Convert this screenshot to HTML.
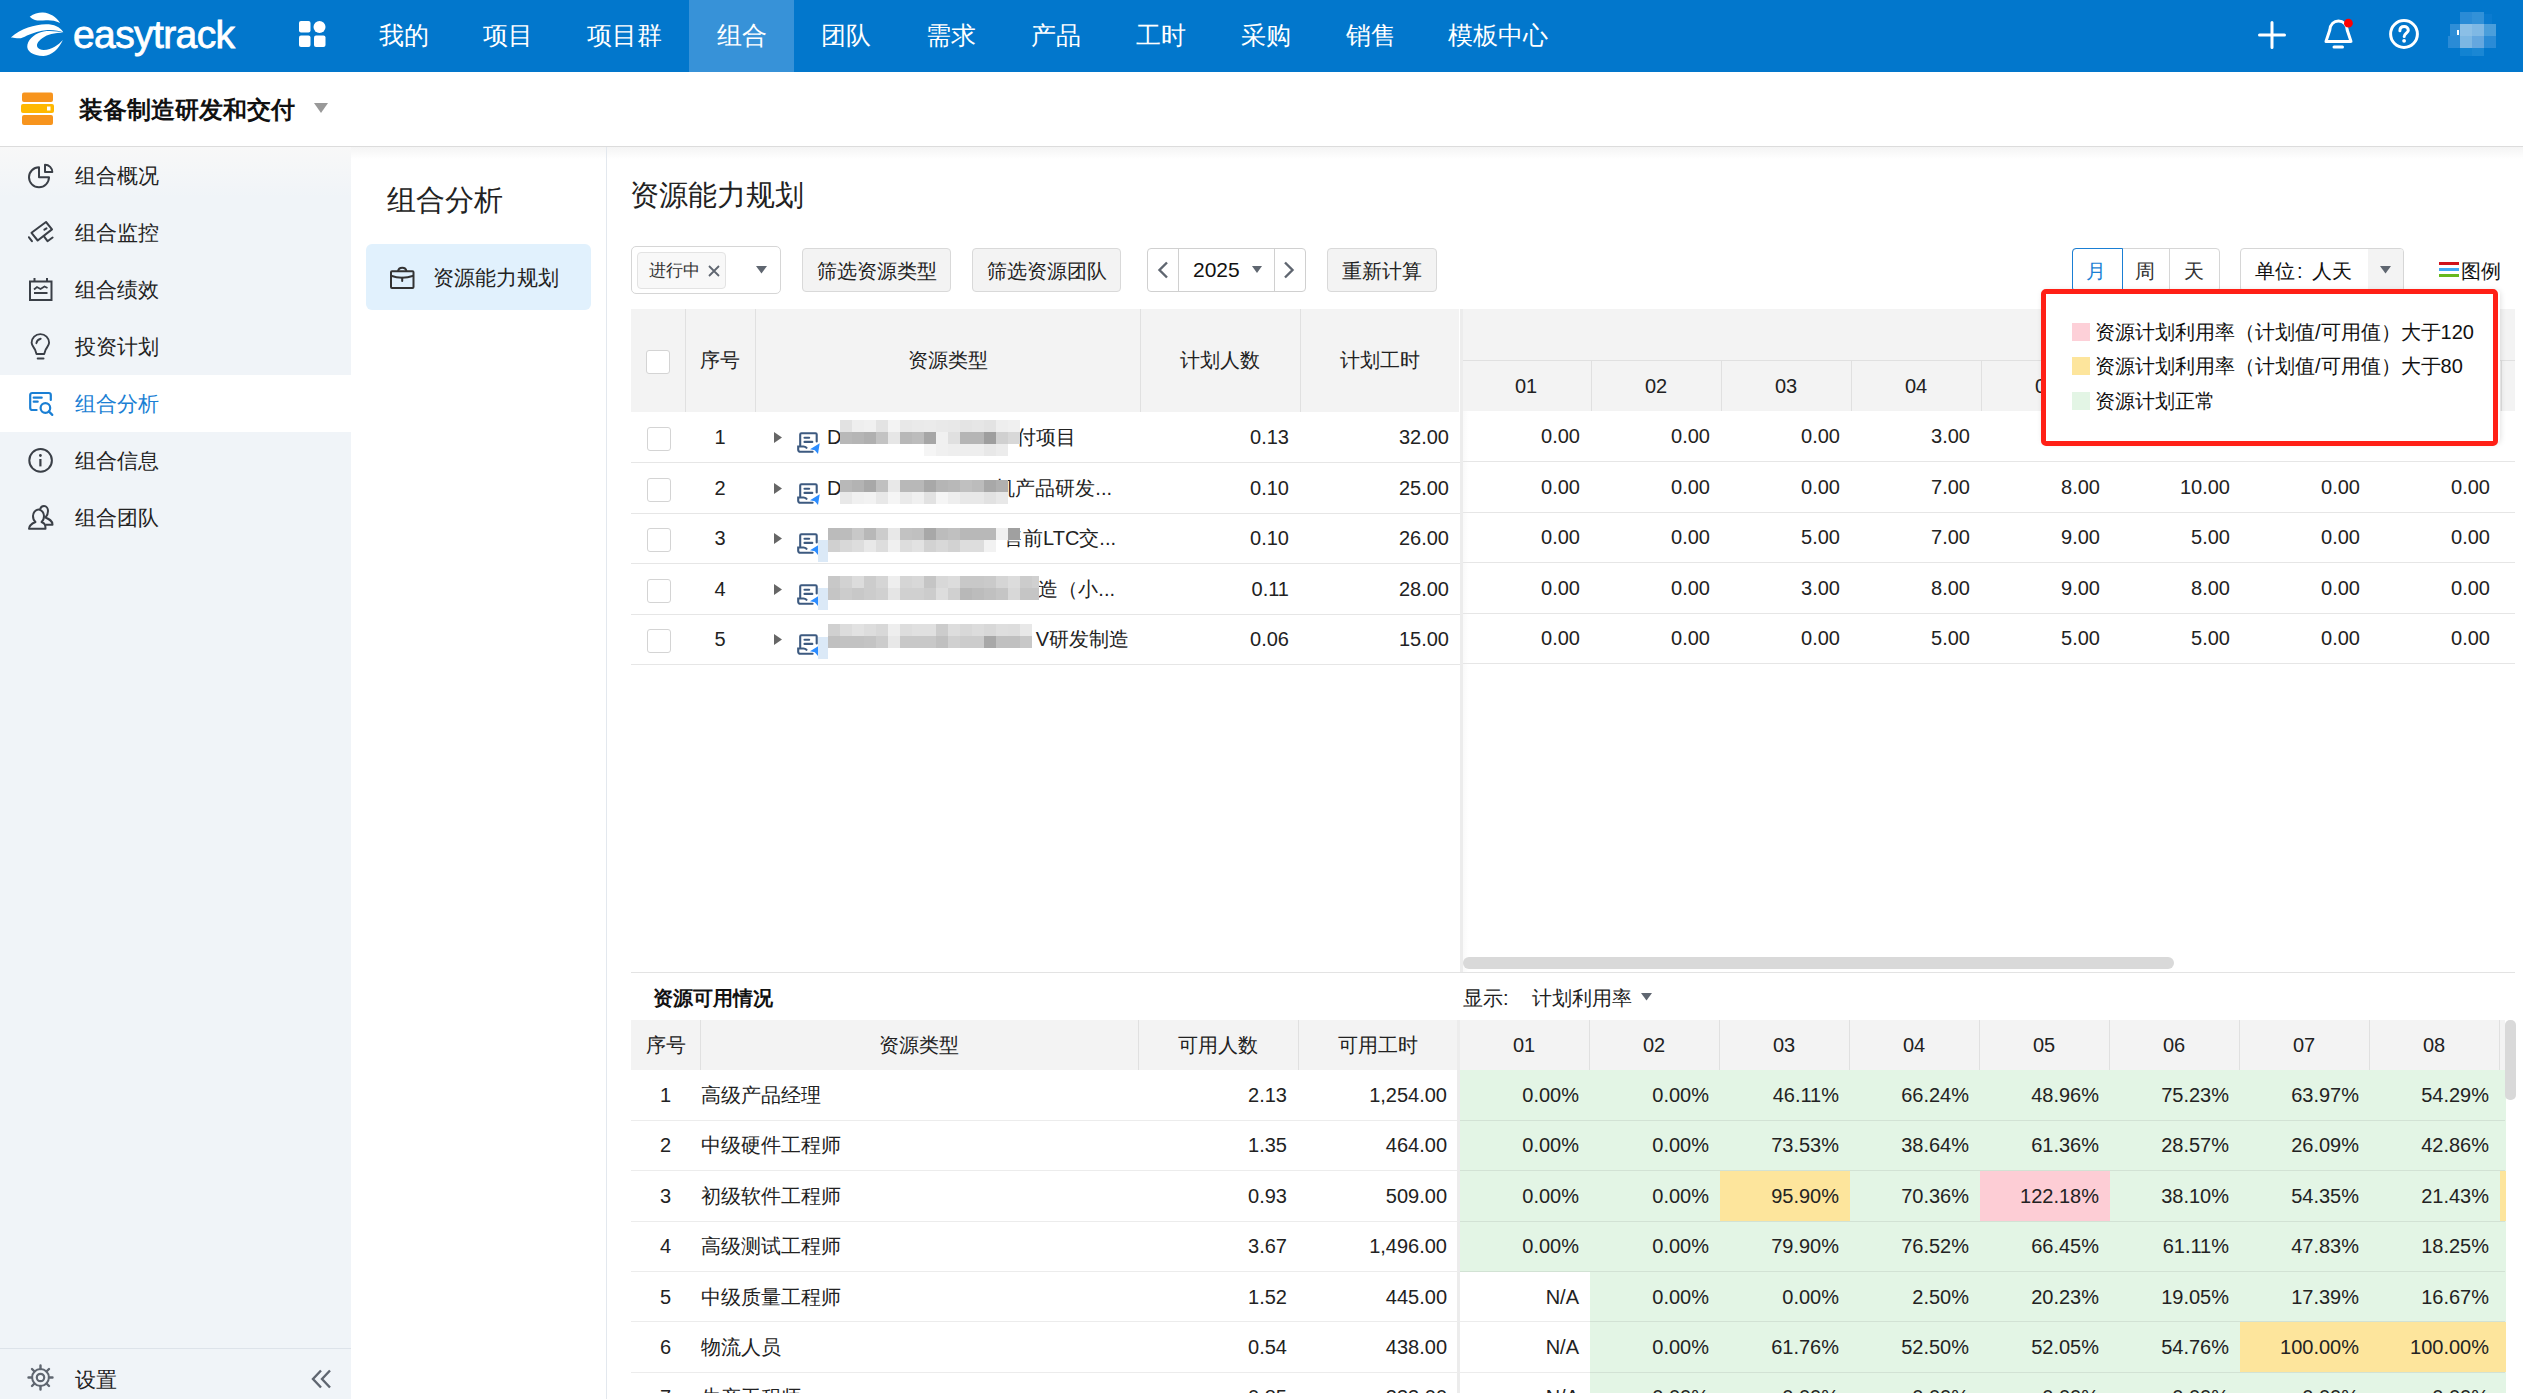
<!DOCTYPE html><html><head><meta charset="utf-8"><style>
*{box-sizing:border-box;margin:0;padding:0}
html,body{width:2523px;height:1399px;overflow:hidden;background:#fff;font-family:"Liberation Sans",sans-serif;color:#222}
.a{position:absolute}
.t{position:absolute;white-space:nowrap}
.nv{position:absolute;top:0;height:72px;line-height:71px;color:#fff;font-size:24.5px;text-align:center}
.si{position:absolute;left:75px;font-size:21px;line-height:30px;color:#222}
.btn{position:absolute;top:248px;height:44px;background:#f3f3f3;border:1px solid #d9d9d9;border-radius:4px;font-size:20px;line-height:44px;text-align:center;color:#222}
.c{position:absolute;font-size:20px;line-height:24px;color:#222;white-space:nowrap}
.r{text-align:right}
.ctr{text-align:center}
.cb{position:absolute;width:24px;height:24px;border:1px solid #d4d4d4;border-radius:3px;background:#fff}
</style></head><body>
<div class="a" style="left:0;top:0;width:2523px;height:72px;background:#0277cc"></div>
<svg class="a" style="left:0;top:0" width="80" height="72" viewBox="0 0 80 72">
<path fill="#fff" d="M29.7 16.7 C34 13.5 39 12.4 43 12.6 C50 13 56 17 60.2 23 C55 20.5 50 20 46 20.3 C42 20.5 38 21 35 20 C32.5 19 31 17.8 29.7 16.7 Z"/>
<path fill="#fff" d="M10.8 37.5 C16 33 22 29.5 28 27.5 C34 25.5 40 24.4 46 24.2 C54 24.2 60 26.5 63.3 32.3 C60 30.8 54 29.8 47.5 30 C40 30.5 33 33 27 35.5 C23 37.5 21 38.8 17 38.2 C14 37.8 12.5 37.5 10.8 37.5 Z"/>
<path fill="#fff" d="M63.3 32.7 C58 31.5 50 30.5 43.6 31.5 C36 33 29 38 27.4 44.7 C26 51 33 56 43.6 55.9 C52 55.5 58.5 49 62.9 40 C58 45 52 50 43.6 49.9 C38 49.5 36 46.5 37.4 43.5 C39 39.5 45 35.5 51.3 33.9 C55 33 59 32.7 63.3 32.7 Z"/>
</svg>
<div class="t" style="left:73px;top:9.5px;font-size:39px;color:#fff;letter-spacing:-0.6px;line-height:50px;-webkit-text-stroke:0.8px #fff">easytrack</div>
<svg class="a" style="left:299px;top:21px" width="27" height="27" viewBox="0 0 27 27">
<rect x="0" y="0" width="11.5" height="11.5" rx="2" fill="#fff"/><circle cx="20.5" cy="6" r="6" fill="#fff"/>
<rect x="0" y="14.5" width="11.5" height="11.5" rx="2" fill="#fff"/><rect x="15" y="14.5" width="11.5" height="11.5" rx="2" fill="#fff"/></svg>
<div class="nv" style="left:352px;width:104px;">我的</div>
<div class="nv" style="left:456px;width:104px;">项目</div>
<div class="nv" style="left:572px;width:104px;">项目群</div>
<div class="nv" style="left:689px;width:105px;background:#3792d8;">组合</div>
<div class="nv" style="left:794px;width:104px;">团队</div>
<div class="nv" style="left:899px;width:104px;">需求</div>
<div class="nv" style="left:1004px;width:104px;">产品</div>
<div class="nv" style="left:1109px;width:104px;">工时</div>
<div class="nv" style="left:1214px;width:104px;">采购</div>
<div class="nv" style="left:1319px;width:104px;">销售</div>
<div class="nv" style="left:1436px;width:124px;">模板中心</div>
<svg class="a" style="left:2258px;top:21px" width="28" height="28" viewBox="0 0 28 28"><path d="M14 1.5V26.5M1.5 14H26.5" stroke="#fff" stroke-width="3" stroke-linecap="round"/></svg>
<svg class="a" style="left:2322px;top:17px" width="34" height="34" viewBox="0 0 34 34">
<path d="M4 24.4 L7.8 13 C8.3 7 12 4 16.5 4 C21 4 24.7 7 25.2 13 L29 24.4 Z" fill="none" stroke="#fff" stroke-width="3" stroke-linejoin="round"/>
<path d="M12 30H20.5" stroke="#fff" stroke-width="3" stroke-linecap="round"/><circle cx="26.4" cy="6.2" r="4.4" fill="#ff0000"/></svg>
<svg class="a" style="left:2388px;top:18px" width="32" height="32" viewBox="0 0 32 32">
<circle cx="16" cy="16" r="13.4" fill="none" stroke="#fff" stroke-width="3"/>
<path d="M11.9 12.8 C11.9 10.1 13.8 8.6 16.2 8.6 C18.6 8.6 20.3 10.2 20.3 12.2 C20.3 15 16.2 15.5 16.2 18.6" fill="none" stroke="#fff" stroke-width="3" stroke-linecap="round"/>
<circle cx="16.1" cy="22.8" r="1.9" fill="#fff"/></svg>
<div class="a" style="left:2460px;top:12px;width:12px;height:12px;background:#2a8bd6"></div>
<div class="a" style="left:2472px;top:12px;width:12px;height:12px;background:#3291d8"></div>
<div class="a" style="left:2484px;top:14px;width:8px;height:10px;background:#0a7bd0"></div>
<div class="a" style="left:2450px;top:24px;width:10px;height:11.7px;background:#2e8ed7"></div>
<div class="a" style="left:2460px;top:24px;width:12px;height:11.7px;background:#8bbfe6"></div>
<div class="a" style="left:2472px;top:24px;width:12px;height:11.7px;background:#7fb8e4"></div>
<div class="a" style="left:2484px;top:24px;width:12px;height:11.7px;background:#4a9edb"></div>
<div class="a" style="left:2448px;top:35.7px;width:12px;height:12px;background:#2a8bd6"></div>
<div class="a" style="left:2460px;top:35.7px;width:12px;height:12px;background:#7cb7e3"></div>
<div class="a" style="left:2472px;top:35.7px;width:12px;height:12px;background:#64a7df"></div>
<div class="a" style="left:2484px;top:35.7px;width:12px;height:12px;background:#2a8bd6"></div>
<div class="a" style="left:2460px;top:47.7px;width:12px;height:8px;background:#1283d2"></div>
<div class="a" style="left:2472px;top:47.7px;width:12px;height:8px;background:#1a87d4"></div>
<div class="a" style="left:2457px;top:30px;width:2px;height:5px;background:#fff"></div>
<div class="a" style="left:0;top:72px;width:2523px;height:75px;background:#fff;border-bottom:1px solid #dcdcdc"></div>
<svg class="a" style="left:21px;top:92px" width="34" height="34" viewBox="0 0 34 34">
<rect x="1" y="0.5" width="31" height="9.5" rx="2" fill="#f7941d"/>
<rect x="0" y="12" width="33" height="9" rx="2" fill="#ffb800"/>
<rect x="26" y="14.5" width="3.5" height="4" fill="#fff"/>
<rect x="1" y="23" width="31" height="10" rx="2" fill="#f7941d"/></svg>
<div class="t" style="left:79px;top:93px;font-size:24px;font-weight:bold;line-height:34px;color:#111">装备制造研发和交付</div>
<svg class="a" style="left:314px;top:103px" width="14" height="10" viewBox="0 0 14 10"><path d="M0 0H14L7 10Z" fill="#999"/></svg>
<div class="a" style="left:0;top:147px;width:351px;height:1252px;background:#f0f4f8"></div>
<div class="a" style="left:0;top:147px;width:351px;height:50px;background:linear-gradient(rgba(248,248,248,1),rgba(248,248,248,0))"></div>
<div class="a" style="left:351px;top:147px;width:2172px;height:12px;background:linear-gradient(rgba(244,244,244,1),rgba(244,244,244,0))"></div>
<div class="a" style="left:0;top:375px;width:351px;height:57px;background:#fff"></div>
<svg class="a" style="left:28px;top:163px" width="28" height="34" viewBox="0 0 28 34"><path d="M11 4.3 A10 10 0 1 0 21 14.3 H11 Z" fill="none" stroke="#3a3f47" stroke-width="2" stroke-linejoin="round"/><path d="M17 1.7 A7.3 7.3 0 0 1 24.3 9 H17 Z" fill="none" stroke="#3a3f47" stroke-width="2" stroke-linejoin="round"/></svg>
<div class="si" style="top:160.5px;color:#222">组合概况</div>
<svg class="a" style="left:28px;top:220px" width="28" height="34" viewBox="0 0 28 34"><path d="M3.5 12.8 L18 2 L24 9.4 L9.7 20.5 Z" fill="none" stroke="#3a3f47" stroke-width="2" stroke-linejoin="round"/><path d="M15.8 16.2 L19.5 21.2 L24.6 17.5" fill="none" stroke="#3a3f47" stroke-width="2" stroke-linecap="round" stroke-linejoin="round"/><path d="M0.8 17.2 L3.9 21.2" stroke="#3a3f47" stroke-width="2" stroke-linecap="round"/><path d="M16.4 9.7 L18.5 8.3" stroke="#3a3f47" stroke-width="2" stroke-linecap="round"/></svg>
<div class="si" style="top:217.5px;color:#222">组合监控</div>
<svg class="a" style="left:28px;top:277px" width="28" height="34" viewBox="0 0 28 34"><rect x="2" y="4.5" width="21.5" height="18.5" fill="none" stroke="#3a3f47" stroke-width="2"/><path d="M6.5 1V4.5M19 1V4.5" stroke="#3a3f47" stroke-width="2"/><path d="M6 12.5 L9 10 L12.5 12 L16.5 9.5 L19.5 11" fill="none" stroke="#3a3f47" stroke-width="1.8"/><path d="M6 16H19.5" stroke="#3a3f47" stroke-width="2"/></svg>
<div class="si" style="top:274.5px;color:#222">组合绩效</div>
<svg class="a" style="left:28px;top:330px" width="28" height="34" viewBox="0 0 28 34"><path d="M8.5 24 L7 19.5 C5 16.5 3.6 15 3.6 12.85 A8.75 8.75 0 0 1 21.1 12.85 C21.1 15 19.7 16.5 17.7 19.5 L16.2 24 Z" fill="none" stroke="#3a3f47" stroke-width="1.9" stroke-linejoin="round"/><path d="M9.7 28.6H15.5" stroke="#3a3f47" stroke-width="2" stroke-linecap="round"/><path d="M8.4 13.2 C8.8 11 10.3 9.3 12.7 8.8" fill="none" stroke="#3a3f47" stroke-width="1.9" stroke-linecap="round"/></svg>
<div class="si" style="top:331.5px;color:#222">投资计划</div>
<svg class="a" style="left:28px;top:391px" width="28" height="34" viewBox="0 0 28 34"><path d="M8.6 19 H4.2 A2 2 0 0 1 2.2 17 V4 A2 2 0 0 1 4.2 2 H20.8 A2 2 0 0 1 22.8 4 V9" fill="none" stroke="#1a7fd4" stroke-width="2.2" stroke-linecap="round"/><path d="M5.7 6.7H13.7M5.7 10.7H9.7" stroke="#1a7fd4" stroke-width="2.2" stroke-linecap="round"/><circle cx="17.4" cy="17" r="4.8" fill="none" stroke="#1a7fd4" stroke-width="2.2"/><path d="M20.8 20.4 L24.3 23.9" stroke="#1a7fd4" stroke-width="2.2" stroke-linecap="round"/></svg>
<div class="si" style="top:388.5px;color:#1a7fd4">组合分析</div>
<svg class="a" style="left:28px;top:448px" width="28" height="34" viewBox="0 0 28 34"><circle cx="12.6" cy="12.4" r="11.3" fill="none" stroke="#3a3f47" stroke-width="2"/><circle cx="12.4" cy="7.5" r="1.4" fill="#3a3f47"/><path d="M12.4 11V18.4" stroke="#3a3f47" stroke-width="2.2"/></svg>
<div class="si" style="top:445.5px;color:#222">组合信息</div>
<svg class="a" style="left:28px;top:505px" width="28" height="34" viewBox="0 0 28 34"><path d="M1 23.7 C1 20 4 18.5 7.5 17 C5.5 15.5 5 13.5 5 11 C5 8 7.3 4.5 10.5 4.5 C13.7 4.5 16 8 16 11 C16 13.5 15.5 15.5 13.5 17 C17 18.5 17.5 20 17.5 23.7 Z" fill="none" stroke="#3a3f47" stroke-width="2" stroke-linejoin="round"/><path d="M12 4.5 C12.5 2.5 14 1 16 1 C18.5 1 20 3.5 20 6 C20 8.5 19.5 10.5 17.5 12.5 C21 14 24.5 15.5 24.5 19.7 H17.5" fill="none" stroke="#3a3f47" stroke-width="2" stroke-linejoin="round"/></svg>
<div class="si" style="top:502.5px;color:#222">组合团队</div>
<div class="a" style="left:0;top:1348px;width:351px;height:1px;background:#dde3ea"></div>
<svg class="a" style="left:27px;top:1364px" width="27" height="27" viewBox="0 0 27 27">
<circle cx="13.5" cy="13.5" r="8.4" fill="none" stroke="#5f6670" stroke-width="2"/><circle cx="13.5" cy="13.5" r="3.7" fill="none" stroke="#5f6670" stroke-width="2.2"/>
<path d="M13.5 1.5V5M13.5 22V25.5M1.5 13.5H5M22 13.5H25.5M5 5L7.5 7.5M19.5 19.5L22 22M5 22L7.5 19.5M19.5 7.5L22 5" stroke="#5f6670" stroke-width="2.4" stroke-linecap="round"/></svg>
<div class="si" style="top:1365px">设置</div>
<svg class="a" style="left:311px;top:1369px" width="21" height="20" viewBox="0 0 21 20"><path d="M10 1.5 L2 10 L10 18.5 M19 1.5 L11 10 L19 18.5" fill="none" stroke="#5f6670" stroke-width="2.4"/></svg>
<div class="a" style="left:606px;top:147px;width:1px;height:1252px;background:#e3e8ee"></div>
<div class="t" style="left:387px;top:182px;font-size:29px;line-height:36px;color:#222">组合分析</div>
<div class="a" style="left:366px;top:244px;width:225px;height:66px;background:#e1f1fd;border-radius:6px"></div>
<svg class="a" style="left:390px;top:265px" width="25" height="25" viewBox="0 0 25 25">
<rect x="1" y="6.3" width="22.5" height="16.7" rx="1" fill="none" stroke="#333" stroke-width="2"/>
<path d="M8 6.3 A4.3 4.3 0 0 1 16.5 6.3" fill="none" stroke="#333" stroke-width="2"/>
<path d="M1 10.8 C8 13.3 16 13.3 23.5 10.8" fill="none" stroke="#333" stroke-width="2"/><path d="M12.2 12.8 V16" stroke="#333" stroke-width="2" stroke-linecap="round"/></svg>
<div class="t" style="left:433px;top:263px;font-size:21.3px;line-height:30px;color:#222">资源能力规划</div>
<div class="t" style="left:630px;top:176px;font-size:29.2px;line-height:38px;color:#222">资源能力规划</div>
<div class="a" style="left:631px;top:246px;width:150px;height:48px;border:1px solid #d6d6d6;border-radius:5px;background:#fff"></div>
<div class="a" style="left:637px;top:252px;width:89px;height:37px;border:1px solid #e3e3e3;border-radius:4px;background:#f8f8f8"></div>
<div class="t" style="left:649px;top:260px;font-size:17px;line-height:22px;color:#333">进行中</div>
<svg class="a" style="left:708px;top:265px" width="12" height="12" viewBox="0 0 12 12"><path d="M1 1L11 11M11 1L1 11" stroke="#5f6670" stroke-width="1.8"/></svg>
<svg class="a" style="left:756px;top:266px" width="11" height="8" viewBox="0 0 11 8"><path d="M0 0H11L5.5 7.5Z" fill="#5f6670"/></svg>
<div class="btn" style="left:802px;width:149px">筛选资源类型</div>
<div class="btn" style="left:972px;width:149px">筛选资源团队</div>
<div class="btn" style="left:1327px;width:110px">重新计算</div>
<div class="a" style="left:1147px;top:248px;width:159px;height:44px;border:1px solid #d0d0d0;border-radius:4px;background:#fff"></div>
<div class="a" style="left:1178px;top:249px;width:1px;height:42px;background:#d0d0d0"></div>
<div class="a" style="left:1274px;top:249px;width:1px;height:42px;background:#d0d0d0"></div>
<svg class="a" style="left:1156px;top:261px" width="14" height="18" viewBox="0 0 14 18"><path d="M11 1.5L3.5 9L11 16.5" fill="none" stroke="#5f6670" stroke-width="2.4"/></svg>
<svg class="a" style="left:1282px;top:261px" width="14" height="18" viewBox="0 0 14 18"><path d="M3 1.5L10.5 9L3 16.5" fill="none" stroke="#5f6670" stroke-width="2.4"/></svg>
<div class="t" style="left:1193px;top:258px;font-size:21px;line-height:24px;color:#111">2025</div>
<svg class="a" style="left:1252px;top:266px" width="10" height="7" viewBox="0 0 10 7"><path d="M0 0H10L5 7Z" fill="#5f6670"/></svg>
<div class="a" style="left:2072px;top:248px;width:148px;height:44px;border:1px solid #d6d6d6;border-radius:4px;background:#fff"></div>
<div class="a" style="left:2072px;top:248px;width:51px;height:44px;border:1px solid #1a7fd4;border-radius:4px 0 0 4px"></div>
<div class="a" style="left:2169px;top:249px;width:1px;height:42px;background:#d6d6d6"></div>
<div class="t" style="left:2086px;top:258px;font-size:20px;line-height:26px;color:#1a7fd4">月</div>
<div class="t" style="left:2135px;top:258px;font-size:20px;line-height:26px;color:#333">周</div>
<div class="t" style="left:2184px;top:258px;font-size:20px;line-height:26px;color:#333">天</div>
<div class="a" style="left:2240px;top:248px;width:164px;height:44px;border:1px solid #d6d6d6;border-radius:4px;background:#fff;overflow:hidden"><div class="a" style="left:127px;top:0;width:37px;height:44px;background:#f3f3f3"></div></div>
<div class="t" style="left:2255px;top:258px;font-size:20px;line-height:26px;color:#111">单位<span style="margin-left:2px">:</span><span style="margin-left:9px">人天</span></div>
<svg class="a" style="left:2380px;top:266px" width="11" height="8" viewBox="0 0 11 8"><path d="M0 0H11L5.5 7.5Z" fill="#5f6670"/></svg>
<div class="a" style="left:2439px;top:262px;width:20px;height:3px;background:#d0131b"></div>
<div class="a" style="left:2439px;top:268px;width:20px;height:3px;background:#3fa9f5"></div>
<div class="a" style="left:2439px;top:274px;width:20px;height:3px;background:#67b81e"></div>
<div class="t" style="left:2461px;top:258px;font-size:20px;line-height:26px;color:#111">图例</div>
<div class="a" style="left:631px;top:309px;width:828px;height:103px;background:#f3f3f3"></div>
<div class="a" style="left:1463px;top:309px;width:1052px;height:102px;background:#f3f3f3"></div>
<div class="a" style="left:1463px;top:360px;width:1052px;height:1px;background:#e0e0e0"></div>
<div class="a" style="left:685px;top:309px;width:1px;height:103px;background:#e0e0e0"></div>
<div class="a" style="left:755px;top:309px;width:1px;height:103px;background:#e0e0e0"></div>
<div class="a" style="left:1140px;top:309px;width:1px;height:103px;background:#e0e0e0"></div>
<div class="a" style="left:1300px;top:309px;width:1px;height:103px;background:#e0e0e0"></div>
<div class="a" style="left:1591px;top:361px;width:1px;height:50px;background:#e0e0e0"></div>
<div class="a" style="left:1721px;top:361px;width:1px;height:50px;background:#e0e0e0"></div>
<div class="a" style="left:1851px;top:361px;width:1px;height:50px;background:#e0e0e0"></div>
<div class="a" style="left:1981px;top:361px;width:1px;height:50px;background:#e0e0e0"></div>
<div class="a" style="left:2111px;top:361px;width:1px;height:50px;background:#e0e0e0"></div>
<div class="a" style="left:2241px;top:361px;width:1px;height:50px;background:#e0e0e0"></div>
<div class="a" style="left:2371px;top:361px;width:1px;height:50px;background:#e0e0e0"></div>
<div class="a" style="left:2501px;top:361px;width:1px;height:50px;background:#e0e0e0"></div>
<div class="cb" style="left:646px;top:350px"></div>
<div class="c" style="left:685px;width:70px;top:348px;text-align:center">序号</div>
<div class="c" style="left:755px;width:385px;top:348px;text-align:center">资源类型</div>
<div class="c" style="left:1140px;width:160px;top:348px;text-align:center">计划人数</div>
<div class="c" style="left:1300px;width:160px;top:348px;text-align:center">计划工时</div>
<div class="c" style="left:1461px;width:130px;top:374px;text-align:center">01</div>
<div class="c" style="left:1591px;width:130px;top:374px;text-align:center">02</div>
<div class="c" style="left:1721px;width:130px;top:374px;text-align:center">03</div>
<div class="c" style="left:1851px;width:130px;top:374px;text-align:center">04</div>
<div class="c" style="left:1981px;width:130px;top:374px;text-align:center">05</div>
<div class="c" style="left:2111px;width:130px;top:374px;text-align:center">06</div>
<div class="c" style="left:2241px;width:130px;top:374px;text-align:center">07</div>
<div class="c" style="left:2371px;width:130px;top:374px;text-align:center">08</div>
<div class="a" style="left:1460px;top:309px;width:3px;height:663px;background:#ececec"></div>
<div class="a" style="left:1463px;top:411px;width:6px;height:561px;background:linear-gradient(90deg,rgba(0,0,0,0.025),rgba(0,0,0,0))"></div>
<div class="a" style="left:631px;top:462.0px;width:829px;height:1px;background:#e6e6e6"></div>
<div class="a" style="left:1463px;top:461.0px;width:1052px;height:1px;background:#e6e6e6"></div>
<div class="cb" style="left:647px;top:427.0px"></div>
<div class="c ctr" style="left:685px;width:70px;top:425.0px">1</div>
<svg class="a" style="left:774px;top:432.0px" width="8" height="11" viewBox="0 0 8 11"><path d="M0 0L8 5.5L0 11Z" fill="#666"/></svg>
<svg class="a" style="left:796px;top:431.0px" width="26" height="26" viewBox="0 0 26 26">
<path d="M4.2 14.5 V3.5 A1.2 1.2 0 0 1 5.4 2.3 H19.5 A1.2 1.2 0 0 1 20.7 3.5 V10.5" fill="none" stroke="#3d5a80" stroke-width="2.1" stroke-linecap="round"/>
<path d="M8.5 6.7H13.2M8.5 10.9H16.3" stroke="#3d5a80" stroke-width="2.1" stroke-linecap="round"/>
<path d="M10.5 16.8 C9.5 15.8 8.5 15.5 7.5 15.5 H2.2 V18.8 A2 2 0 0 0 4.2 20.8 H16.6" fill="none" stroke="#3d5a80" stroke-width="2.1" stroke-linecap="round"/>
<path d="M23.7 12.2 L14 18.3 L18.8 19.3 L22 23.1 Z" fill="#2b8cff"/></svg>
<div class="c" style="left:827px;top:425.0px">D</div>
<div class="c" style="right:1447px;top:425.0px">付项目</div>
<div class="c r" style="left:1140px;width:149px;top:425.0px">0.13</div>
<div class="c r" style="left:1300px;width:149px;top:425.0px">32.00</div>
<div class="c r" style="left:1461px;width:119px;top:424.0px">0.00</div>
<div class="c r" style="left:1591px;width:119px;top:424.0px">0.00</div>
<div class="c r" style="left:1721px;width:119px;top:424.0px">0.00</div>
<div class="c r" style="left:1851px;width:119px;top:424.0px">3.00</div>
<div class="a" style="left:631px;top:512.5px;width:829px;height:1px;background:#e6e6e6"></div>
<div class="a" style="left:1463px;top:511.5px;width:1052px;height:1px;background:#e6e6e6"></div>
<div class="cb" style="left:647px;top:477.5px"></div>
<div class="c ctr" style="left:685px;width:70px;top:475.5px">2</div>
<svg class="a" style="left:774px;top:482.5px" width="8" height="11" viewBox="0 0 8 11"><path d="M0 0L8 5.5L0 11Z" fill="#666"/></svg>
<svg class="a" style="left:796px;top:481.5px" width="26" height="26" viewBox="0 0 26 26">
<path d="M4.2 14.5 V3.5 A1.2 1.2 0 0 1 5.4 2.3 H19.5 A1.2 1.2 0 0 1 20.7 3.5 V10.5" fill="none" stroke="#3d5a80" stroke-width="2.1" stroke-linecap="round"/>
<path d="M8.5 6.7H13.2M8.5 10.9H16.3" stroke="#3d5a80" stroke-width="2.1" stroke-linecap="round"/>
<path d="M10.5 16.8 C9.5 15.8 8.5 15.5 7.5 15.5 H2.2 V18.8 A2 2 0 0 0 4.2 20.8 H16.6" fill="none" stroke="#3d5a80" stroke-width="2.1" stroke-linecap="round"/>
<path d="M23.7 12.2 L14 18.3 L18.8 19.3 L22 23.1 Z" fill="#2b8cff"/></svg>
<div class="c" style="left:827px;top:475.5px">D</div>
<div class="c" style="right:1411px;top:475.5px">机产品研发...</div>
<div class="c r" style="left:1140px;width:149px;top:475.5px">0.10</div>
<div class="c r" style="left:1300px;width:149px;top:475.5px">25.00</div>
<div class="c r" style="left:1461px;width:119px;top:474.5px">0.00</div>
<div class="c r" style="left:1591px;width:119px;top:474.5px">0.00</div>
<div class="c r" style="left:1721px;width:119px;top:474.5px">0.00</div>
<div class="c r" style="left:1851px;width:119px;top:474.5px">7.00</div>
<div class="c r" style="left:1981px;width:119px;top:474.5px">8.00</div>
<div class="c r" style="left:2111px;width:119px;top:474.5px">10.00</div>
<div class="c r" style="left:2241px;width:119px;top:474.5px">0.00</div>
<div class="c r" style="left:2371px;width:119px;top:474.5px">0.00</div>
<div class="a" style="left:631px;top:563.0px;width:829px;height:1px;background:#e6e6e6"></div>
<div class="a" style="left:1463px;top:562.0px;width:1052px;height:1px;background:#e6e6e6"></div>
<div class="cb" style="left:647px;top:528.0px"></div>
<div class="c ctr" style="left:685px;width:70px;top:526.0px">3</div>
<svg class="a" style="left:774px;top:533.0px" width="8" height="11" viewBox="0 0 8 11"><path d="M0 0L8 5.5L0 11Z" fill="#666"/></svg>
<svg class="a" style="left:796px;top:532.0px" width="26" height="26" viewBox="0 0 26 26">
<path d="M4.2 14.5 V3.5 A1.2 1.2 0 0 1 5.4 2.3 H19.5 A1.2 1.2 0 0 1 20.7 3.5 V10.5" fill="none" stroke="#3d5a80" stroke-width="2.1" stroke-linecap="round"/>
<path d="M8.5 6.7H13.2M8.5 10.9H16.3" stroke="#3d5a80" stroke-width="2.1" stroke-linecap="round"/>
<path d="M10.5 16.8 C9.5 15.8 8.5 15.5 7.5 15.5 H2.2 V18.8 A2 2 0 0 0 4.2 20.8 H16.6" fill="none" stroke="#3d5a80" stroke-width="2.1" stroke-linecap="round"/>
<path d="M23.7 12.2 L14 18.3 L18.8 19.3 L22 23.1 Z" fill="#2b8cff"/></svg>
<div class="c" style="right:1407px;top:526.0px">售前LTC交...</div>
<div class="c r" style="left:1140px;width:149px;top:526.0px">0.10</div>
<div class="c r" style="left:1300px;width:149px;top:526.0px">26.00</div>
<div class="c r" style="left:1461px;width:119px;top:525.0px">0.00</div>
<div class="c r" style="left:1591px;width:119px;top:525.0px">0.00</div>
<div class="c r" style="left:1721px;width:119px;top:525.0px">5.00</div>
<div class="c r" style="left:1851px;width:119px;top:525.0px">7.00</div>
<div class="c r" style="left:1981px;width:119px;top:525.0px">9.00</div>
<div class="c r" style="left:2111px;width:119px;top:525.0px">5.00</div>
<div class="c r" style="left:2241px;width:119px;top:525.0px">0.00</div>
<div class="c r" style="left:2371px;width:119px;top:525.0px">0.00</div>
<div class="a" style="left:631px;top:613.5px;width:829px;height:1px;background:#e6e6e6"></div>
<div class="a" style="left:1463px;top:612.5px;width:1052px;height:1px;background:#e6e6e6"></div>
<div class="cb" style="left:647px;top:578.5px"></div>
<div class="c ctr" style="left:685px;width:70px;top:576.5px">4</div>
<svg class="a" style="left:774px;top:583.5px" width="8" height="11" viewBox="0 0 8 11"><path d="M0 0L8 5.5L0 11Z" fill="#666"/></svg>
<svg class="a" style="left:796px;top:582.5px" width="26" height="26" viewBox="0 0 26 26">
<path d="M4.2 14.5 V3.5 A1.2 1.2 0 0 1 5.4 2.3 H19.5 A1.2 1.2 0 0 1 20.7 3.5 V10.5" fill="none" stroke="#3d5a80" stroke-width="2.1" stroke-linecap="round"/>
<path d="M8.5 6.7H13.2M8.5 10.9H16.3" stroke="#3d5a80" stroke-width="2.1" stroke-linecap="round"/>
<path d="M10.5 16.8 C9.5 15.8 8.5 15.5 7.5 15.5 H2.2 V18.8 A2 2 0 0 0 4.2 20.8 H16.6" fill="none" stroke="#3d5a80" stroke-width="2.1" stroke-linecap="round"/>
<path d="M23.7 12.2 L14 18.3 L18.8 19.3 L22 23.1 Z" fill="#2b8cff"/></svg>
<div class="c" style="right:1408px;top:576.5px">造（小...</div>
<div class="c r" style="left:1140px;width:149px;top:576.5px">0.11</div>
<div class="c r" style="left:1300px;width:149px;top:576.5px">28.00</div>
<div class="c r" style="left:1461px;width:119px;top:575.5px">0.00</div>
<div class="c r" style="left:1591px;width:119px;top:575.5px">0.00</div>
<div class="c r" style="left:1721px;width:119px;top:575.5px">3.00</div>
<div class="c r" style="left:1851px;width:119px;top:575.5px">8.00</div>
<div class="c r" style="left:1981px;width:119px;top:575.5px">9.00</div>
<div class="c r" style="left:2111px;width:119px;top:575.5px">8.00</div>
<div class="c r" style="left:2241px;width:119px;top:575.5px">0.00</div>
<div class="c r" style="left:2371px;width:119px;top:575.5px">0.00</div>
<div class="a" style="left:631px;top:664.0px;width:829px;height:1px;background:#e6e6e6"></div>
<div class="a" style="left:1463px;top:663.0px;width:1052px;height:1px;background:#e6e6e6"></div>
<div class="cb" style="left:647px;top:629.0px"></div>
<div class="c ctr" style="left:685px;width:70px;top:627.0px">5</div>
<svg class="a" style="left:774px;top:634.0px" width="8" height="11" viewBox="0 0 8 11"><path d="M0 0L8 5.5L0 11Z" fill="#666"/></svg>
<svg class="a" style="left:796px;top:633.0px" width="26" height="26" viewBox="0 0 26 26">
<path d="M4.2 14.5 V3.5 A1.2 1.2 0 0 1 5.4 2.3 H19.5 A1.2 1.2 0 0 1 20.7 3.5 V10.5" fill="none" stroke="#3d5a80" stroke-width="2.1" stroke-linecap="round"/>
<path d="M8.5 6.7H13.2M8.5 10.9H16.3" stroke="#3d5a80" stroke-width="2.1" stroke-linecap="round"/>
<path d="M10.5 16.8 C9.5 15.8 8.5 15.5 7.5 15.5 H2.2 V18.8 A2 2 0 0 0 4.2 20.8 H16.6" fill="none" stroke="#3d5a80" stroke-width="2.1" stroke-linecap="round"/>
<path d="M23.7 12.2 L14 18.3 L18.8 19.3 L22 23.1 Z" fill="#2b8cff"/></svg>
<div class="c" style="right:1394px;top:627.0px">V研发制造</div>
<div class="c r" style="left:1140px;width:149px;top:627.0px">0.06</div>
<div class="c r" style="left:1300px;width:149px;top:627.0px">15.00</div>
<div class="c r" style="left:1461px;width:119px;top:626.0px">0.00</div>
<div class="c r" style="left:1591px;width:119px;top:626.0px">0.00</div>
<div class="c r" style="left:1721px;width:119px;top:626.0px">0.00</div>
<div class="c r" style="left:1851px;width:119px;top:626.0px">5.00</div>
<div class="c r" style="left:1981px;width:119px;top:626.0px">5.00</div>
<div class="c r" style="left:2111px;width:119px;top:626.0px">5.00</div>
<div class="c r" style="left:2241px;width:119px;top:626.0px">0.00</div>
<div class="c r" style="left:2371px;width:119px;top:626.0px">0.00</div>
<div class="a" style="left:840px;top:420px;width:12px;height:12px;background:#e2e2e2"></div>
<div class="a" style="left:852px;top:420px;width:12px;height:12px;background:#eeeeee"></div>
<div class="a" style="left:864px;top:420px;width:12px;height:12px;background:#f0f0f0"></div>
<div class="a" style="left:876px;top:420px;width:12px;height:12px;background:#e3e3e3"></div>
<div class="a" style="left:888px;top:420px;width:12px;height:12px;background:#f3f3f3"></div>
<div class="a" style="left:900px;top:420px;width:12px;height:12px;background:#e8e8e8"></div>
<div class="a" style="left:912px;top:420px;width:12px;height:12px;background:#eaeaea"></div>
<div class="a" style="left:924px;top:420px;width:12px;height:12px;background:#ebebeb"></div>
<div class="a" style="left:936px;top:420px;width:12px;height:12px;background:#e9e9e9"></div>
<div class="a" style="left:948px;top:420px;width:12px;height:12px;background:#e8e8e8"></div>
<div class="a" style="left:960px;top:420px;width:12px;height:12px;background:#e4e4e4"></div>
<div class="a" style="left:972px;top:420px;width:12px;height:12px;background:#e6e6e6"></div>
<div class="a" style="left:984px;top:420px;width:12px;height:12px;background:#e3e3e3"></div>
<div class="a" style="left:996px;top:420px;width:12px;height:12px;background:#eeeeee"></div>
<div class="a" style="left:1008px;top:420px;width:12px;height:12px;background:#f0f0f0"></div>
<div class="a" style="left:840px;top:432px;width:12px;height:12px;background:#b8b8b8"></div>
<div class="a" style="left:852px;top:432px;width:12px;height:12px;background:#b5b5b5"></div>
<div class="a" style="left:864px;top:432px;width:12px;height:12px;background:#b0b0b0"></div>
<div class="a" style="left:876px;top:432px;width:12px;height:12px;background:#c3c3c3"></div>
<div class="a" style="left:888px;top:432px;width:12px;height:12px;background:#e6e6e6"></div>
<div class="a" style="left:900px;top:432px;width:12px;height:12px;background:#b8b8b8"></div>
<div class="a" style="left:912px;top:432px;width:12px;height:12px;background:#bcbcbc"></div>
<div class="a" style="left:924px;top:432px;width:12px;height:12px;background:#a6a6a6"></div>
<div class="a" style="left:936px;top:432px;width:12px;height:12px;background:#f0f0f0"></div>
<div class="a" style="left:948px;top:432px;width:12px;height:12px;background:#e0e0e0"></div>
<div class="a" style="left:960px;top:432px;width:12px;height:12px;background:#b5b5b5"></div>
<div class="a" style="left:972px;top:432px;width:12px;height:12px;background:#b5b5b5"></div>
<div class="a" style="left:984px;top:432px;width:12px;height:12px;background:#9e9e9e"></div>
<div class="a" style="left:996px;top:432px;width:12px;height:12px;background:#d0d0d0"></div>
<div class="a" style="left:1008px;top:432px;width:12px;height:12px;background:#d8d8d8"></div>
<div class="a" style="left:924px;top:444px;width:12px;height:12px;background:#f5f5f5"></div>
<div class="a" style="left:936px;top:444px;width:12px;height:12px;background:#f0f0f0"></div>
<div class="a" style="left:948px;top:444px;width:12px;height:12px;background:#eeeeee"></div>
<div class="a" style="left:960px;top:444px;width:12px;height:12px;background:#eeeeee"></div>
<div class="a" style="left:972px;top:444px;width:12px;height:12px;background:#eeeeee"></div>
<div class="a" style="left:984px;top:444px;width:12px;height:12px;background:#e8e8e8"></div>
<div class="a" style="left:996px;top:444px;width:12px;height:12px;background:#ececec"></div>
<div class="a" style="left:840px;top:480px;width:12px;height:12px;background:#b8b8b8"></div>
<div class="a" style="left:852px;top:480px;width:12px;height:12px;background:#b3b3b3"></div>
<div class="a" style="left:864px;top:480px;width:12px;height:12px;background:#a8a8a8"></div>
<div class="a" style="left:876px;top:480px;width:12px;height:12px;background:#c0c0c0"></div>
<div class="a" style="left:888px;top:480px;width:12px;height:12px;background:#e8e8e8"></div>
<div class="a" style="left:900px;top:480px;width:12px;height:12px;background:#b8b8b8"></div>
<div class="a" style="left:912px;top:480px;width:12px;height:12px;background:#b8b8b8"></div>
<div class="a" style="left:924px;top:480px;width:12px;height:12px;background:#a8a8a8"></div>
<div class="a" style="left:936px;top:480px;width:12px;height:12px;background:#b5b5b5"></div>
<div class="a" style="left:948px;top:480px;width:12px;height:12px;background:#b8b8b8"></div>
<div class="a" style="left:960px;top:480px;width:12px;height:12px;background:#c0c0c0"></div>
<div class="a" style="left:972px;top:480px;width:12px;height:12px;background:#bcbcbc"></div>
<div class="a" style="left:984px;top:480px;width:12px;height:12px;background:#a8a8a8"></div>
<div class="a" style="left:996px;top:480px;width:12px;height:12px;background:#b0b0b0"></div>
<div class="a" style="left:840px;top:492px;width:12px;height:12px;background:#e8e8e8"></div>
<div class="a" style="left:852px;top:492px;width:12px;height:12px;background:#f0f0f0"></div>
<div class="a" style="left:864px;top:492px;width:12px;height:12px;background:#f2f2f2"></div>
<div class="a" style="left:876px;top:492px;width:12px;height:12px;background:#e8e8e8"></div>
<div class="a" style="left:888px;top:492px;width:12px;height:12px;background:#f5f5f5"></div>
<div class="a" style="left:900px;top:492px;width:12px;height:12px;background:#eaeaea"></div>
<div class="a" style="left:912px;top:492px;width:12px;height:12px;background:#f0f0f0"></div>
<div class="a" style="left:924px;top:492px;width:12px;height:12px;background:#e2e2e2"></div>
<div class="a" style="left:936px;top:492px;width:12px;height:12px;background:#f5f5f5"></div>
<div class="a" style="left:948px;top:492px;width:12px;height:12px;background:#eeeeee"></div>
<div class="a" style="left:960px;top:492px;width:12px;height:12px;background:#e8e8e8"></div>
<div class="a" style="left:972px;top:492px;width:12px;height:12px;background:#e8e8e8"></div>
<div class="a" style="left:984px;top:492px;width:12px;height:12px;background:#e2e2e2"></div>
<div class="a" style="left:996px;top:492px;width:12px;height:12px;background:#e8e8e8"></div>
<div class="a" style="left:828px;top:528px;width:12px;height:12px;background:#bbbbbb"></div>
<div class="a" style="left:840px;top:528px;width:12px;height:12px;background:#bcbcbc"></div>
<div class="a" style="left:852px;top:528px;width:12px;height:12px;background:#c8c8c8"></div>
<div class="a" style="left:864px;top:528px;width:12px;height:12px;background:#b8b8b8"></div>
<div class="a" style="left:876px;top:528px;width:12px;height:12px;background:#cccccc"></div>
<div class="a" style="left:888px;top:528px;width:12px;height:12px;background:#e8e8e8"></div>
<div class="a" style="left:900px;top:528px;width:12px;height:12px;background:#c2c2c2"></div>
<div class="a" style="left:912px;top:528px;width:12px;height:12px;background:#c0c0c0"></div>
<div class="a" style="left:924px;top:528px;width:12px;height:12px;background:#a8a8a8"></div>
<div class="a" style="left:936px;top:528px;width:12px;height:12px;background:#bcbcbc"></div>
<div class="a" style="left:948px;top:528px;width:12px;height:12px;background:#c0c0c0"></div>
<div class="a" style="left:960px;top:528px;width:12px;height:12px;background:#b8b8b8"></div>
<div class="a" style="left:972px;top:528px;width:12px;height:12px;background:#b8b8b8"></div>
<div class="a" style="left:984px;top:528px;width:12px;height:12px;background:#b8b8b8"></div>
<div class="a" style="left:996px;top:528px;width:12px;height:12px;background:#f0f0f0"></div>
<div class="a" style="left:1008px;top:528px;width:12px;height:12px;background:#a0a0a0"></div>
<div class="a" style="left:828px;top:540px;width:12px;height:12px;background:#d0d0d0"></div>
<div class="a" style="left:840px;top:540px;width:12px;height:12px;background:#d8d8d8"></div>
<div class="a" style="left:852px;top:540px;width:12px;height:12px;background:#dddddd"></div>
<div class="a" style="left:864px;top:540px;width:12px;height:12px;background:#e8e8e8"></div>
<div class="a" style="left:876px;top:540px;width:12px;height:12px;background:#dddddd"></div>
<div class="a" style="left:888px;top:540px;width:12px;height:12px;background:#f0f0f0"></div>
<div class="a" style="left:900px;top:540px;width:12px;height:12px;background:#dddddd"></div>
<div class="a" style="left:912px;top:540px;width:12px;height:12px;background:#e2e2e2"></div>
<div class="a" style="left:924px;top:540px;width:12px;height:12px;background:#d2d2d2"></div>
<div class="a" style="left:936px;top:540px;width:12px;height:12px;background:#d8d8d8"></div>
<div class="a" style="left:948px;top:540px;width:12px;height:12px;background:#d2d2d2"></div>
<div class="a" style="left:960px;top:540px;width:12px;height:12px;background:#dddddd"></div>
<div class="a" style="left:972px;top:540px;width:12px;height:12px;background:#dddddd"></div>
<div class="a" style="left:984px;top:540px;width:12px;height:12px;background:#f2f2f2"></div>
<div class="a" style="left:828px;top:576px;width:12px;height:12px;background:#c8c8c8"></div>
<div class="a" style="left:840px;top:576px;width:12px;height:12px;background:#d2d2d2"></div>
<div class="a" style="left:852px;top:576px;width:12px;height:12px;background:#dcdcdc"></div>
<div class="a" style="left:864px;top:576px;width:12px;height:12px;background:#cccccc"></div>
<div class="a" style="left:876px;top:576px;width:12px;height:12px;background:#d5d5d5"></div>
<div class="a" style="left:888px;top:576px;width:12px;height:12px;background:#eeeeee"></div>
<div class="a" style="left:900px;top:576px;width:12px;height:12px;background:#d5d5d5"></div>
<div class="a" style="left:912px;top:576px;width:12px;height:12px;background:#d8d8d8"></div>
<div class="a" style="left:924px;top:576px;width:12px;height:12px;background:#c5c5c5"></div>
<div class="a" style="left:936px;top:576px;width:12px;height:12px;background:#d8d8d8"></div>
<div class="a" style="left:948px;top:576px;width:12px;height:12px;background:#dcdcdc"></div>
<div class="a" style="left:960px;top:576px;width:12px;height:12px;background:#c8c8c8"></div>
<div class="a" style="left:972px;top:576px;width:12px;height:12px;background:#c8c8c8"></div>
<div class="a" style="left:984px;top:576px;width:12px;height:12px;background:#cacaca"></div>
<div class="a" style="left:996px;top:576px;width:12px;height:12px;background:#d5d5d5"></div>
<div class="a" style="left:1008px;top:576px;width:12px;height:12px;background:#dcdcdc"></div>
<div class="a" style="left:1020px;top:576px;width:12px;height:12px;background:#cccccc"></div>
<div class="a" style="left:1032px;top:576px;width:7px;height:12px;background:#d0d0d0"></div>
<div class="a" style="left:828px;top:588px;width:12px;height:12px;background:#c5c5c5"></div>
<div class="a" style="left:840px;top:588px;width:12px;height:12px;background:#cccccc"></div>
<div class="a" style="left:852px;top:588px;width:12px;height:12px;background:#c8c8c8"></div>
<div class="a" style="left:864px;top:588px;width:12px;height:12px;background:#cccccc"></div>
<div class="a" style="left:876px;top:588px;width:12px;height:12px;background:#d0d0d0"></div>
<div class="a" style="left:888px;top:588px;width:12px;height:12px;background:#e5e5e5"></div>
<div class="a" style="left:900px;top:588px;width:12px;height:12px;background:#d0d0d0"></div>
<div class="a" style="left:912px;top:588px;width:12px;height:12px;background:#d0d0d0"></div>
<div class="a" style="left:924px;top:588px;width:12px;height:12px;background:#cccccc"></div>
<div class="a" style="left:936px;top:588px;width:12px;height:12px;background:#dddddd"></div>
<div class="a" style="left:948px;top:588px;width:12px;height:12px;background:#d0d0d0"></div>
<div class="a" style="left:960px;top:588px;width:12px;height:12px;background:#b8b8b8"></div>
<div class="a" style="left:972px;top:588px;width:12px;height:12px;background:#bcbcbc"></div>
<div class="a" style="left:984px;top:588px;width:12px;height:12px;background:#c0c0c0"></div>
<div class="a" style="left:996px;top:588px;width:12px;height:12px;background:#c5c5c5"></div>
<div class="a" style="left:1008px;top:588px;width:12px;height:12px;background:#d8d8d8"></div>
<div class="a" style="left:1020px;top:588px;width:12px;height:12px;background:#c5c5c5"></div>
<div class="a" style="left:1032px;top:588px;width:7px;height:12px;background:#c5c5c5"></div>
<div class="a" style="left:828px;top:624px;width:12px;height:12px;background:#d0d0d0"></div>
<div class="a" style="left:840px;top:624px;width:12px;height:12px;background:#dcdcdc"></div>
<div class="a" style="left:852px;top:624px;width:12px;height:12px;background:#e2e2e2"></div>
<div class="a" style="left:864px;top:624px;width:12px;height:12px;background:#dddddd"></div>
<div class="a" style="left:876px;top:624px;width:12px;height:12px;background:#d8d8d8"></div>
<div class="a" style="left:888px;top:624px;width:12px;height:12px;background:#eeeeee"></div>
<div class="a" style="left:900px;top:624px;width:12px;height:12px;background:#dddddd"></div>
<div class="a" style="left:912px;top:624px;width:12px;height:12px;background:#e0e0e0"></div>
<div class="a" style="left:924px;top:624px;width:12px;height:12px;background:#e0e0e0"></div>
<div class="a" style="left:936px;top:624px;width:12px;height:12px;background:#cccccc"></div>
<div class="a" style="left:948px;top:624px;width:12px;height:12px;background:#dddddd"></div>
<div class="a" style="left:960px;top:624px;width:12px;height:12px;background:#d8d8d8"></div>
<div class="a" style="left:972px;top:624px;width:12px;height:12px;background:#dcdcdc"></div>
<div class="a" style="left:984px;top:624px;width:12px;height:12px;background:#d8d8d8"></div>
<div class="a" style="left:996px;top:624px;width:12px;height:12px;background:#dedede"></div>
<div class="a" style="left:1008px;top:624px;width:12px;height:12px;background:#dddddd"></div>
<div class="a" style="left:1020px;top:624px;width:12px;height:12px;background:#e8e8e8"></div>
<div class="a" style="left:828px;top:636px;width:12px;height:12px;background:#c0c0c0"></div>
<div class="a" style="left:840px;top:636px;width:12px;height:12px;background:#c2c2c2"></div>
<div class="a" style="left:852px;top:636px;width:12px;height:12px;background:#c2c2c2"></div>
<div class="a" style="left:864px;top:636px;width:12px;height:12px;background:#c4c4c4"></div>
<div class="a" style="left:876px;top:636px;width:12px;height:12px;background:#cccccc"></div>
<div class="a" style="left:888px;top:636px;width:12px;height:12px;background:#e8e8e8"></div>
<div class="a" style="left:900px;top:636px;width:12px;height:12px;background:#c8c8c8"></div>
<div class="a" style="left:912px;top:636px;width:12px;height:12px;background:#c8c8c8"></div>
<div class="a" style="left:924px;top:636px;width:12px;height:12px;background:#c8c8c8"></div>
<div class="a" style="left:936px;top:636px;width:12px;height:12px;background:#c0c0c0"></div>
<div class="a" style="left:948px;top:636px;width:12px;height:12px;background:#d0d0d0"></div>
<div class="a" style="left:960px;top:636px;width:12px;height:12px;background:#cccccc"></div>
<div class="a" style="left:972px;top:636px;width:12px;height:12px;background:#cccccc"></div>
<div class="a" style="left:984px;top:636px;width:12px;height:12px;background:#a8a8a8"></div>
<div class="a" style="left:996px;top:636px;width:12px;height:12px;background:#c0c0c0"></div>
<div class="a" style="left:1008px;top:636px;width:12px;height:12px;background:#c0c0c0"></div>
<div class="a" style="left:1020px;top:636px;width:12px;height:12px;background:#c8c8c8"></div>
<div class="a" style="left:818px;top:540px;width:10px;height:22px;background:#dbe9f7"></div>
<div class="a" style="left:818px;top:588px;width:10px;height:22px;background:#dbe9f7"></div>
<div class="a" style="left:818px;top:637px;width:10px;height:22px;background:#dbe9f7"></div>
<div class="a" style="left:1463px;top:957px;width:711px;height:12px;background:#d9d9d9;border-radius:6px"></div>
<div class="a" style="left:631px;top:972px;width:1884px;height:1px;background:#e3e3e3"></div>
<div class="a" style="left:2043px;top:290px;width:457px;height:152px;background:#fff;border-radius:4px;box-shadow:0 1px 6px rgba(0,0,0,0.15)"></div>
<div class="a" style="left:2072px;top:323px;width:18px;height:18px;background:#fdd0d8"></div>
<div class="t" style="left:2095px;top:319px;font-size:20px;line-height:26px;color:#111">资源计划利用率（计划值/可用值）大于120</div>
<div class="a" style="left:2072px;top:357px;width:18px;height:18px;background:#fde59c"></div>
<div class="t" style="left:2095px;top:353px;font-size:20px;line-height:26px;color:#111">资源计划利用率（计划值/可用值）大于80</div>
<div class="a" style="left:2072px;top:392px;width:18px;height:18px;background:#e3f5e5"></div>
<div class="t" style="left:2095px;top:388px;font-size:20px;line-height:26px;color:#111">资源计划正常</div>
<div class="a" style="left:2041px;top:289px;width:457px;height:157px;border:5px solid #ff2016;border-radius:5px"></div>
<div class="t" style="left:653px;top:985px;font-size:20px;font-weight:bold;line-height:26px;color:#111">资源可用情况</div>
<div class="t" style="left:1463px;top:985px;font-size:20px;line-height:26px;color:#222">显示:</div>
<div class="t" style="left:1532px;top:985px;font-size:20px;line-height:26px;color:#222">计划利用率</div>
<svg class="a" style="left:1641px;top:993px" width="11" height="8" viewBox="0 0 11 8"><path d="M0 0H11L5.5 7.5Z" fill="#5f6670"/></svg>
<div class="a" style="left:631px;top:1020px;width:827px;height:50px;background:#f3f3f3"></div>
<div class="a" style="left:1459px;top:1020px;width:1046px;height:50px;background:#f3f3f3"></div>
<div class="a" style="left:700px;top:1020px;width:1px;height:50px;background:#e0e0e0"></div>
<div class="a" style="left:1138px;top:1020px;width:1px;height:50px;background:#e0e0e0"></div>
<div class="a" style="left:1298px;top:1020px;width:1px;height:50px;background:#e0e0e0"></div>
<div class="a" style="left:1589px;top:1020px;width:1px;height:50px;background:#e0e0e0"></div>
<div class="a" style="left:1719px;top:1020px;width:1px;height:50px;background:#e0e0e0"></div>
<div class="a" style="left:1849px;top:1020px;width:1px;height:50px;background:#e0e0e0"></div>
<div class="a" style="left:1979px;top:1020px;width:1px;height:50px;background:#e0e0e0"></div>
<div class="a" style="left:2109px;top:1020px;width:1px;height:50px;background:#e0e0e0"></div>
<div class="a" style="left:2239px;top:1020px;width:1px;height:50px;background:#e0e0e0"></div>
<div class="a" style="left:2369px;top:1020px;width:1px;height:50px;background:#e0e0e0"></div>
<div class="a" style="left:2499px;top:1020px;width:1px;height:50px;background:#e0e0e0"></div>
<div class="c ctr" style="left:631px;width:69px;top:1033px">序号</div>
<div class="c ctr" style="left:700px;width:438px;top:1033px">资源类型</div>
<div class="c ctr" style="left:1138px;width:160px;top:1033px">可用人数</div>
<div class="c ctr" style="left:1298px;width:160px;top:1033px">可用工时</div>
<div class="c ctr" style="left:1459px;width:130px;top:1033px">01</div>
<div class="c ctr" style="left:1589px;width:130px;top:1033px">02</div>
<div class="c ctr" style="left:1719px;width:130px;top:1033px">03</div>
<div class="c ctr" style="left:1849px;width:130px;top:1033px">04</div>
<div class="c ctr" style="left:1979px;width:130px;top:1033px">05</div>
<div class="c ctr" style="left:2109px;width:130px;top:1033px">06</div>
<div class="c ctr" style="left:2239px;width:130px;top:1033px">07</div>
<div class="c ctr" style="left:2369px;width:130px;top:1033px">08</div>
<div class="a" style="left:0;top:0;width:0;height:0"></div>
<div class="a" style="left:606px;top:1070px;width:1917px;height:323px;overflow:hidden">
<div class="a" style="left:854px;top:0.0px;width:130px;height:50.4px;background:#e3f5e5"></div>
<div class="a" style="left:984px;top:0.0px;width:130px;height:50.4px;background:#e3f5e5"></div>
<div class="a" style="left:1114px;top:0.0px;width:130px;height:50.4px;background:#e3f5e5"></div>
<div class="a" style="left:1244px;top:0.0px;width:130px;height:50.4px;background:#e3f5e5"></div>
<div class="a" style="left:1374px;top:0.0px;width:130px;height:50.4px;background:#e3f5e5"></div>
<div class="a" style="left:1504px;top:0.0px;width:130px;height:50.4px;background:#e3f5e5"></div>
<div class="a" style="left:1634px;top:0.0px;width:130px;height:50.4px;background:#e3f5e5"></div>
<div class="a" style="left:1764px;top:0.0px;width:130px;height:50.4px;background:#e3f5e5"></div>
<div class="a" style="left:1894px;top:0.0px;width:6px;height:50.4px;background:#e3f5e5"></div>
<div class="a" style="left:854px;top:50.4px;width:130px;height:50.4px;background:#e3f5e5"></div>
<div class="a" style="left:984px;top:50.4px;width:130px;height:50.4px;background:#e3f5e5"></div>
<div class="a" style="left:1114px;top:50.4px;width:130px;height:50.4px;background:#e3f5e5"></div>
<div class="a" style="left:1244px;top:50.4px;width:130px;height:50.4px;background:#e3f5e5"></div>
<div class="a" style="left:1374px;top:50.4px;width:130px;height:50.4px;background:#e3f5e5"></div>
<div class="a" style="left:1504px;top:50.4px;width:130px;height:50.4px;background:#e3f5e5"></div>
<div class="a" style="left:1634px;top:50.4px;width:130px;height:50.4px;background:#e3f5e5"></div>
<div class="a" style="left:1764px;top:50.4px;width:130px;height:50.4px;background:#e3f5e5"></div>
<div class="a" style="left:1894px;top:50.4px;width:6px;height:50.4px;background:#e3f5e5"></div>
<div class="a" style="left:854px;top:100.8px;width:130px;height:50.4px;background:#e3f5e5"></div>
<div class="a" style="left:984px;top:100.8px;width:130px;height:50.4px;background:#e3f5e5"></div>
<div class="a" style="left:1114px;top:100.8px;width:130px;height:50.4px;background:#fde59c"></div>
<div class="a" style="left:1244px;top:100.8px;width:130px;height:50.4px;background:#e3f5e5"></div>
<div class="a" style="left:1374px;top:100.8px;width:130px;height:50.4px;background:#fdcdd5"></div>
<div class="a" style="left:1504px;top:100.8px;width:130px;height:50.4px;background:#e3f5e5"></div>
<div class="a" style="left:1634px;top:100.8px;width:130px;height:50.4px;background:#e3f5e5"></div>
<div class="a" style="left:1764px;top:100.8px;width:130px;height:50.4px;background:#e3f5e5"></div>
<div class="a" style="left:1894px;top:100.8px;width:6px;height:50.4px;background:#fde59c"></div>
<div class="a" style="left:854px;top:151.2px;width:130px;height:50.4px;background:#e3f5e5"></div>
<div class="a" style="left:984px;top:151.2px;width:130px;height:50.4px;background:#e3f5e5"></div>
<div class="a" style="left:1114px;top:151.2px;width:130px;height:50.4px;background:#e3f5e5"></div>
<div class="a" style="left:1244px;top:151.2px;width:130px;height:50.4px;background:#e3f5e5"></div>
<div class="a" style="left:1374px;top:151.2px;width:130px;height:50.4px;background:#e3f5e5"></div>
<div class="a" style="left:1504px;top:151.2px;width:130px;height:50.4px;background:#e3f5e5"></div>
<div class="a" style="left:1634px;top:151.2px;width:130px;height:50.4px;background:#e3f5e5"></div>
<div class="a" style="left:1764px;top:151.2px;width:130px;height:50.4px;background:#e3f5e5"></div>
<div class="a" style="left:1894px;top:151.2px;width:6px;height:50.4px;background:#e3f5e5"></div>
<div class="a" style="left:854px;top:201.6px;width:130px;height:50.4px;background:#fff"></div>
<div class="a" style="left:984px;top:201.6px;width:130px;height:50.4px;background:#e3f5e5"></div>
<div class="a" style="left:1114px;top:201.6px;width:130px;height:50.4px;background:#e3f5e5"></div>
<div class="a" style="left:1244px;top:201.6px;width:130px;height:50.4px;background:#e3f5e5"></div>
<div class="a" style="left:1374px;top:201.6px;width:130px;height:50.4px;background:#e3f5e5"></div>
<div class="a" style="left:1504px;top:201.6px;width:130px;height:50.4px;background:#e3f5e5"></div>
<div class="a" style="left:1634px;top:201.6px;width:130px;height:50.4px;background:#e3f5e5"></div>
<div class="a" style="left:1764px;top:201.6px;width:130px;height:50.4px;background:#e3f5e5"></div>
<div class="a" style="left:1894px;top:201.6px;width:6px;height:50.4px;background:#e3f5e5"></div>
<div class="a" style="left:854px;top:252.0px;width:130px;height:50.4px;background:#fff"></div>
<div class="a" style="left:984px;top:252.0px;width:130px;height:50.4px;background:#e3f5e5"></div>
<div class="a" style="left:1114px;top:252.0px;width:130px;height:50.4px;background:#e3f5e5"></div>
<div class="a" style="left:1244px;top:252.0px;width:130px;height:50.4px;background:#e3f5e5"></div>
<div class="a" style="left:1374px;top:252.0px;width:130px;height:50.4px;background:#e3f5e5"></div>
<div class="a" style="left:1504px;top:252.0px;width:130px;height:50.4px;background:#e3f5e5"></div>
<div class="a" style="left:1634px;top:252.0px;width:130px;height:50.4px;background:#fde59c"></div>
<div class="a" style="left:1764px;top:252.0px;width:130px;height:50.4px;background:#fde59c"></div>
<div class="a" style="left:1894px;top:252.0px;width:6px;height:50.4px;background:#fde59c"></div>
<div class="a" style="left:854px;top:302.4px;width:130px;height:50.4px;background:#fff"></div>
<div class="a" style="left:984px;top:302.4px;width:130px;height:50.4px;background:#e3f5e5"></div>
<div class="a" style="left:1114px;top:302.4px;width:130px;height:50.4px;background:#e3f5e5"></div>
<div class="a" style="left:1244px;top:302.4px;width:130px;height:50.4px;background:#e3f5e5"></div>
<div class="a" style="left:1374px;top:302.4px;width:130px;height:50.4px;background:#e3f5e5"></div>
<div class="a" style="left:1504px;top:302.4px;width:130px;height:50.4px;background:#e3f5e5"></div>
<div class="a" style="left:1634px;top:302.4px;width:130px;height:50.4px;background:#e3f5e5"></div>
<div class="a" style="left:1764px;top:302.4px;width:130px;height:50.4px;background:#e3f5e5"></div>
<div class="a" style="left:1894px;top:302.4px;width:6px;height:50.4px;background:#e3f5e5"></div>
<div class="a" style="left:25px;top:49.7px;width:1874px;height:1px;background:rgba(0,0,0,0.075)"></div>
<div class="a" style="left:25px;top:100.1px;width:1874px;height:1px;background:rgba(0,0,0,0.075)"></div>
<div class="a" style="left:25px;top:150.5px;width:1874px;height:1px;background:rgba(0,0,0,0.075)"></div>
<div class="a" style="left:25px;top:200.9px;width:1874px;height:1px;background:rgba(0,0,0,0.075)"></div>
<div class="a" style="left:25px;top:251.3px;width:1874px;height:1px;background:rgba(0,0,0,0.075)"></div>
<div class="a" style="left:25px;top:301.7px;width:1874px;height:1px;background:rgba(0,0,0,0.075)"></div>
<div class="a" style="left:25px;top:352.1px;width:1874px;height:1px;background:rgba(0,0,0,0.075)"></div>
<div class="c ctr" style="left:25px;width:69px;top:13.0px">1</div>
<div class="c" style="left:95px;top:13.0px">高级产品经理</div>
<div class="c r" style="left:532px;width:149px;top:13.0px">2.13</div>
<div class="c r" style="left:692px;width:149px;top:13.0px">1,254.00</div>
<div class="c r" style="left:853px;width:120px;top:13.0px">0.00%</div>
<div class="c r" style="left:983px;width:120px;top:13.0px">0.00%</div>
<div class="c r" style="left:1113px;width:120px;top:13.0px">46.11%</div>
<div class="c r" style="left:1243px;width:120px;top:13.0px">66.24%</div>
<div class="c r" style="left:1373px;width:120px;top:13.0px">48.96%</div>
<div class="c r" style="left:1503px;width:120px;top:13.0px">75.23%</div>
<div class="c r" style="left:1633px;width:120px;top:13.0px">63.97%</div>
<div class="c r" style="left:1763px;width:120px;top:13.0px">54.29%</div>
<div class="c ctr" style="left:25px;width:69px;top:63.4px">2</div>
<div class="c" style="left:95px;top:63.4px">中级硬件工程师</div>
<div class="c r" style="left:532px;width:149px;top:63.4px">1.35</div>
<div class="c r" style="left:692px;width:149px;top:63.4px">464.00</div>
<div class="c r" style="left:853px;width:120px;top:63.4px">0.00%</div>
<div class="c r" style="left:983px;width:120px;top:63.4px">0.00%</div>
<div class="c r" style="left:1113px;width:120px;top:63.4px">73.53%</div>
<div class="c r" style="left:1243px;width:120px;top:63.4px">38.64%</div>
<div class="c r" style="left:1373px;width:120px;top:63.4px">61.36%</div>
<div class="c r" style="left:1503px;width:120px;top:63.4px">28.57%</div>
<div class="c r" style="left:1633px;width:120px;top:63.4px">26.09%</div>
<div class="c r" style="left:1763px;width:120px;top:63.4px">42.86%</div>
<div class="c ctr" style="left:25px;width:69px;top:113.8px">3</div>
<div class="c" style="left:95px;top:113.8px">初级软件工程师</div>
<div class="c r" style="left:532px;width:149px;top:113.8px">0.93</div>
<div class="c r" style="left:692px;width:149px;top:113.8px">509.00</div>
<div class="c r" style="left:853px;width:120px;top:113.8px">0.00%</div>
<div class="c r" style="left:983px;width:120px;top:113.8px">0.00%</div>
<div class="c r" style="left:1113px;width:120px;top:113.8px">95.90%</div>
<div class="c r" style="left:1243px;width:120px;top:113.8px">70.36%</div>
<div class="c r" style="left:1373px;width:120px;top:113.8px">122.18%</div>
<div class="c r" style="left:1503px;width:120px;top:113.8px">38.10%</div>
<div class="c r" style="left:1633px;width:120px;top:113.8px">54.35%</div>
<div class="c r" style="left:1763px;width:120px;top:113.8px">21.43%</div>
<div class="c ctr" style="left:25px;width:69px;top:164.2px">4</div>
<div class="c" style="left:95px;top:164.2px">高级测试工程师</div>
<div class="c r" style="left:532px;width:149px;top:164.2px">3.67</div>
<div class="c r" style="left:692px;width:149px;top:164.2px">1,496.00</div>
<div class="c r" style="left:853px;width:120px;top:164.2px">0.00%</div>
<div class="c r" style="left:983px;width:120px;top:164.2px">0.00%</div>
<div class="c r" style="left:1113px;width:120px;top:164.2px">79.90%</div>
<div class="c r" style="left:1243px;width:120px;top:164.2px">76.52%</div>
<div class="c r" style="left:1373px;width:120px;top:164.2px">66.45%</div>
<div class="c r" style="left:1503px;width:120px;top:164.2px">61.11%</div>
<div class="c r" style="left:1633px;width:120px;top:164.2px">47.83%</div>
<div class="c r" style="left:1763px;width:120px;top:164.2px">18.25%</div>
<div class="c ctr" style="left:25px;width:69px;top:214.6px">5</div>
<div class="c" style="left:95px;top:214.6px">中级质量工程师</div>
<div class="c r" style="left:532px;width:149px;top:214.6px">1.52</div>
<div class="c r" style="left:692px;width:149px;top:214.6px">445.00</div>
<div class="c r" style="left:853px;width:120px;top:214.6px">N/A</div>
<div class="c r" style="left:983px;width:120px;top:214.6px">0.00%</div>
<div class="c r" style="left:1113px;width:120px;top:214.6px">0.00%</div>
<div class="c r" style="left:1243px;width:120px;top:214.6px">2.50%</div>
<div class="c r" style="left:1373px;width:120px;top:214.6px">20.23%</div>
<div class="c r" style="left:1503px;width:120px;top:214.6px">19.05%</div>
<div class="c r" style="left:1633px;width:120px;top:214.6px">17.39%</div>
<div class="c r" style="left:1763px;width:120px;top:214.6px">16.67%</div>
<div class="c ctr" style="left:25px;width:69px;top:265.0px">6</div>
<div class="c" style="left:95px;top:265.0px">物流人员</div>
<div class="c r" style="left:532px;width:149px;top:265.0px">0.54</div>
<div class="c r" style="left:692px;width:149px;top:265.0px">438.00</div>
<div class="c r" style="left:853px;width:120px;top:265.0px">N/A</div>
<div class="c r" style="left:983px;width:120px;top:265.0px">0.00%</div>
<div class="c r" style="left:1113px;width:120px;top:265.0px">61.76%</div>
<div class="c r" style="left:1243px;width:120px;top:265.0px">52.50%</div>
<div class="c r" style="left:1373px;width:120px;top:265.0px">52.05%</div>
<div class="c r" style="left:1503px;width:120px;top:265.0px">54.76%</div>
<div class="c r" style="left:1633px;width:120px;top:265.0px">100.00%</div>
<div class="c r" style="left:1763px;width:120px;top:265.0px">100.00%</div>
<div class="c ctr" style="left:25px;width:69px;top:315.4px">7</div>
<div class="c" style="left:95px;top:315.4px">生产工程师</div>
<div class="c r" style="left:532px;width:149px;top:315.4px">0.85</div>
<div class="c r" style="left:692px;width:149px;top:315.4px">333.00</div>
<div class="c r" style="left:853px;width:120px;top:315.4px">N/A</div>
<div class="c r" style="left:983px;width:120px;top:315.4px">0.00%</div>
<div class="c r" style="left:1113px;width:120px;top:315.4px">0.00%</div>
<div class="c r" style="left:1243px;width:120px;top:315.4px">0.00%</div>
<div class="c r" style="left:1373px;width:120px;top:315.4px">0.00%</div>
<div class="c r" style="left:1503px;width:120px;top:315.4px">0.00%</div>
<div class="c r" style="left:1633px;width:120px;top:315.4px">0.00%</div>
<div class="c r" style="left:1763px;width:120px;top:315.4px">0.00%</div>
</div>
<div class="a" style="left:1457px;top:1020px;width:3px;height:373px;background:#ececec"></div>
<div class="a" style="left:2505px;top:1020px;width:11px;height:80px;background:#d9d9d9;border-radius:5px"></div>
</body></html>
